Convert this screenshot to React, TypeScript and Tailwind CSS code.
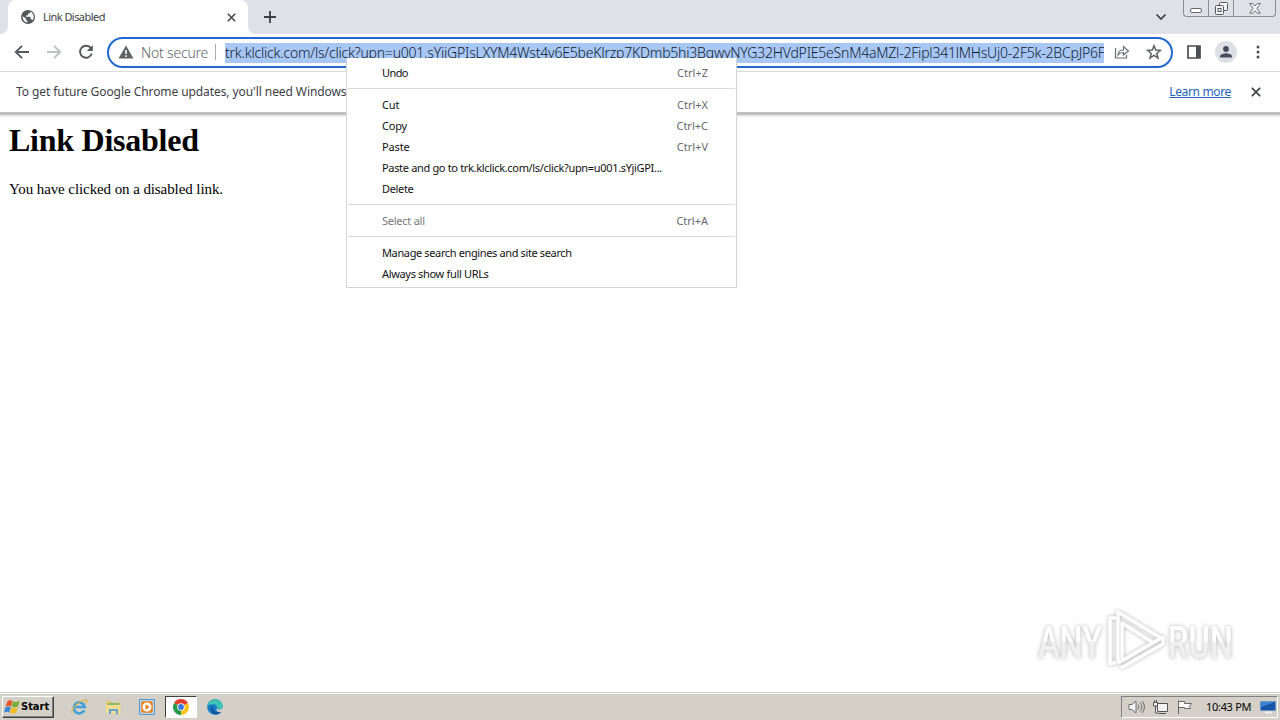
import type { ReactNode } from "react";

const url =
    "trk.klclick.com/ls/click?upn=u001.sYjiGPIsLXYM4Wst4v6E5beKJrzp7KDmb5hi3BqwyNYG32HVdPIE5eSnM4aMZl-2Fipl341lMHsUj0-2F5k-2BCpJP6F";

type Item = { label: string; keys?: string; disabled?: boolean; spacing?: string };

const menu: Item[][] = [
    [{ label: "Undo", keys: "Ctrl+Z", spacing: "tracking-[-0.6px]" }],
    [
        { label: "Cut", keys: "Ctrl+X", spacing: "tracking-[-0.1px]" },
        { label: "Copy", keys: "Ctrl+C", spacing: "tracking-[-0.2px]" },
        { label: "Paste", keys: "Ctrl+V", spacing: "tracking-[-0.15px]" },
        { label: "Paste and go to trk.klclick.com/ls/click?upn=u001.sYjiGPI..." },
        { label: "Delete" },
    ],
    [{ label: "Select all", keys: "Ctrl+A", disabled: true, spacing: "tracking-[-0.25px]" }],
    [
        { label: "Manage search engines and site search", spacing: "tracking-[-0.37px]" },
        { label: "Always show full URLs" },
    ],
];

const Globe = () => (
    <svg width="16" height="16" viewBox="0 0 16 16" className="shrink-0">
        <circle cx="8" cy="8" r="7" fill="#54585d" />
        <path d="M2.6 7.2 6 9.5v1.2l1.4 1.4v1.5A5.7 5.7 0 0 1 2.6 7.2zM9.8 2.6c2.3.8 3.9 2.9 3.9 5.4 0 1.2-.4 2.4-1.1 3.3-.2-.6-.7-1-1.4-1h-.6V8.5c0-.4-.3-.7-.7-.7H6V6.5h1.3c.4 0 .7-.3.7-.7V4.5h1c.7 0 1.3-.5 1.3-1.2z" fill="#fff" />
    </svg>
);

const Close = ({ size = 9 }: { size?: number }) => (
    <svg width={size} height={size} viewBox="0 0 9 9">
        <path d="M.8.8l7.4 7.4M8.2.8L.8 8.2" stroke="#45484c" strokeWidth="1.6" />
    </svg>
);

const TabStrip = () => (
    <div className="flex h-[34px] bg-[#dee1e6]">
        <div className="flex h-full w-2 items-end bg-white">
            <div className="h-full w-2 rounded-br-lg bg-[#dee1e6]" />
        </div>
        <div className="flex w-60 items-center rounded-t-lg bg-white pl-3 pr-[12px]">
            <Globe />
            <span className="ml-[7px] flex-1 text-[11px] tracking-[-0.55px] text-[#3c4043]">Link Disabled</span>
            <Close />
        </div>
        <div className="h-full w-2 bg-white">
            <div className="h-full w-2 rounded-bl-lg bg-[#dee1e6]" />
        </div>
        <svg width="14" height="14" viewBox="0 0 14 14" className="ml-[7px] mt-[10px]">
            <path d="M7 1v12M1 7h12" stroke="#3c4043" strokeWidth="1.8" />
        </svg>
        <div className="flex-1" />
        <svg width="12" height="8" viewBox="0 0 12 8" className="mr-[16px] mt-[13px]">
            <path d="M1.5 1.5 6 6l4.5-4.5" stroke="#3c4043" strokeWidth="1.7" fill="none" />
        </svg>
        <div className="mr-1 flex h-[17px] w-[93px] rounded-b-[4px] border border-t-0 border-[#8a8d92] bg-[#dee1e6]">
            <div className="flex w-[25px] justify-center border-r border-[#8a8d92] pt-2">
                <div className="h-[5px] w-3 rounded-[2px] border border-[#63666b] bg-white" />
            </div>
            <div className="flex w-[25px] justify-center border-r border-[#8a8d92] pt-[2px]">
                <svg width="13" height="13" viewBox="0 0 13 13" fill="#f5f5f5" stroke="#55585e">
                    <rect x="4.5" y=".5" width="8" height="8" rx="1" />
                    <rect x=".5" y="3.5" width="8" height="9" rx="1" />
                    <rect x="3" y="6.5" width="3" height="3" />
                </svg>
            </div>
            <div className="flex flex-1 justify-center pt-[3px]">
                <svg width="12" height="11" viewBox="0 0 12 11" fill="#f5f5f5" stroke="#6a6d72">
                    <path d="M.7.5h3L6 3 8.3.5h3L7.9 5.4l3.4 4.8h-3L6 7.8l-2.3 2.4h-3l3.4-4.8z" />
                </svg>
            </div>
        </div>
    </div>
);

const Toolbar = () => (
    <div className="flex h-[38px] items-center border-b border-[#d8dadd] bg-white">
        <svg width="16" height="16" viewBox="0 0 16 16" className="-mt-px ml-[14px]" fill="none" stroke="#55595e" strokeWidth="1.9">
            <path d="M15 8H2.5M8 1.8 1.8 8 8 14.2" />
        </svg>
        <svg width="16" height="16" viewBox="0 0 16 16" className="-mt-px ml-4" fill="none" stroke="#bcbfc3" strokeWidth="1.9">
            <path d="M1 8h12.5M8 1.8 14.2 8 8 14.2" />
        </svg>
        <svg width="16" height="16" viewBox="0 0 16 16" className="-mt-px ml-4">
            <path d="M13 4.3A6 6 0 1 0 13.8 9.5" fill="none" stroke="#55595e" strokeWidth="1.9" />
            <path d="M14.8 1v6h-6z" fill="#55595e" />
        </svg>
        <div className="ml-[13px] flex h-[31px] w-[1066px] items-center rounded-full border-2 border-[#2368cf]">
            <svg width="16" height="14" viewBox="0 0 16 14" className="-mt-px ml-[9px]">
                <path d="M8 .5 15.5 13.5H.5z" fill="#5f6368" />
                <path d="M8 5v4M8 10.3v1.6" stroke="#fff" strokeWidth="1.5" />
            </svg>
            <span className="ml-[7px] w-[68px] whitespace-nowrap text-[14px] font-light tracking-[-0.2px] text-[#5f6368]">Not secure</span>
            <div className="-mt-px ml-[6px] h-4 w-px bg-[#a9acb0]" />
            <div className="ml-[9px] h-5 w-[879px] overflow-hidden whitespace-nowrap bg-[#a8c7f5] text-[14px] font-light leading-5 tracking-[-0.21px] text-[#101c30]">
                {url}
            </div>
            <svg width="16" height="14" viewBox="0 0 16 14" className="-mt-px ml-[10px]" fill="none" stroke="#6a6e73" strokeWidth="1.2">
                <path d="M1.5 3v10h11v-3" />
                <path d="M4 10c.3-3.5 2.5-5 5.5-5V1.5l5 4.5-5 4V7.500C7 7.500 5.500 8 4 10z" />
            </svg>
            <svg width="16" height="16" viewBox="0 0 16 16" className="-mt-px ml-4" fill="none" stroke="#5f6368" strokeWidth="1.5">
                <path d="m8 1.7 1.7 4.4 4.7.3-3.6 3 1.2 4.6-4-2.6L4 14l1.2-4.6-3.6-3 4.7-.3z" />
            </svg>
        </div>
        <svg width="14" height="14" viewBox="0 0 14 14" className="-mt-px ml-[14px]">
            <path d="M1 1h12v12H1z" fill="none" stroke="#4b4e53" strokeWidth="1.7" />
            <path d="M9 1h4v12H9z" fill="#4b4e53" />
        </svg>
        <div className="-mt-px ml-[14px] flex size-[22px] items-center justify-center rounded-full bg-[#dcdfe4]">
            <svg width="14" height="14" viewBox="0 0 14 14" fill="#454d5e">
                <circle cx="7" cy="4" r="2.9" />
                <path d="M1 12.5v-1.2C1 9.3 5 8.3 7 8.3s6 1 6 3v1.2z" />
            </svg>
        </div>
        <svg width="4" height="14" viewBox="0 0 4 14" className="-mt-px ml-[19px]" fill="#4b4e53">
            <circle cx="2" cy="2" r="1.5" />
            <circle cx="2" cy="7" r="1.5" />
            <circle cx="2" cy="12" r="1.5" />
        </svg>
    </div>
);

const InfoBar = () => (
    <div className="flex h-10 items-center justify-between whitespace-nowrap bg-white pl-4 pr-[19px] text-[12px] text-[#3c4043]">
        <span className="tracking-[-0.08px]">To get future Google Chrome updates, you'll need Windows</span>
        <div className="flex items-center">
            <a className="mr-5 tracking-[-0.35px] text-[#2463bd] underline">Learn more</a>
            <Close size={10} />
        </div>
    </div>
);

const ContextMenu = () => (
    <div className="absolute left-[346px] top-[58px] h-[230px] w-[391px] border border-t-0 border-[#d3d5d8] bg-white pt-1 text-[11px] text-[#111]">
        {menu.map((group, i) => (
            <div key={i}>
                {i > 0 && (
                    <div className="h-[11px] pt-[5px]">
                        <div className="mx-px h-px bg-[#d9dadd]" />
                    </div>
                )}
                {group.map((item) => (
                    <div
                        key={item.label}
                        className={`flex h-[21px] items-center justify-between whitespace-nowrap pl-[35px] pr-[28px] pt-[2px] ${item.spacing ?? "tracking-[-0.33px]"}`}
                    >
                        <span className={item.disabled ? "text-[#77797c]" : ""}>{item.label}</span>
                        {item.keys && <span className="tracking-normal text-[#65676a]">{item.keys}</span>}
                    </div>
                ))}
            </div>
        ))}
    </div>
);

const Watermark = () => (
    <div className="absolute left-[1036px] top-[606px]">
        <svg width="210" height="70" viewBox="0 0 210 70" className="[filter:drop-shadow(0_0_2px_#b4b4b4)]">
            <defs>
                <linearGradient id="fade" x1="0" y1="0" x2="0" y2="70" gradientUnits="userSpaceOnUse">
                    <stop offset=".5" stopColor="#fff" />
                    <stop offset=".52" stopColor="#f0f0f0" />
                </linearGradient>
            </defs>
            <g fill="url(#fade)" fontFamily="Roboto" fontSize="45" fontWeight="500">
                <text x="2" y="52" textLength="64" lengthAdjust="spacingAndGlyphs">ANY</text>
                <text x="132" y="52" textLength="65" lengthAdjust="spacingAndGlyphs">RUN</text>
            </g>
            <g fill="none" stroke="#fff" strokeWidth="3.5" strokeLinejoin="round">
                <path d="M82 57V6l43 26-43 25" />
                <path d="M80 12h-6v46l6-2M85 62l42-24v-8M86 53V17l30 19" />
            </g>
        </svg>
    </div>
);

const ChromeLogo = () => (
    <svg width="16" height="16" viewBox="0 0 16 16">
        <path d="M8 8 1.07 4A8 8 0 0 1 14.93 4z" fill="#e33b2e" />
        <path d="M8 8 14.93 4A8 8 0 0 1 8 16z" fill="#fcc31e" />
        <path d="M8 8v8A8 8 0 0 1 1.07 4z" fill="#259b4b" />
        <circle cx="8" cy="8" r="3.8" fill="#fff" />
        <circle cx="8" cy="8" r="2.9" fill="#3978dc" />
    </svg>
);

const Slot = ({ children, active }: { children: ReactNode; active?: boolean }) => (
    <div
        className={
            active
                ? "flex h-[22px] w-8 items-center justify-center border border-[#404040] border-b-white border-r-white bg-white"
                : "flex h-[22px] w-8 items-center justify-center"
        }
    >
        {children}
    </div>
);

const Taskbar = () => (
    <div className="flex h-7 items-center border-t border-[#d4d0c8] bg-[#d4d0c8] shadow-[inset_0_1px_0_#fff]">
        <div className="ml-[2px] mt-px flex h-[22px] w-[52px] items-center border border-b-[#404040] border-l-white border-r-[#404040] border-t-white pl-px shadow-[inset_-1px_-1px_0_#808080]">
            <svg width="16" height="16" viewBox="0 0 16 16" className="shrink-0">
                <path d="M3.5 2C5.5.8 7 1 8.5 2L7 7.4c-1.7-1-3.2-1-5.300 0z" fill="#e55726" />
                <path d="M9.2 2.3c2 1.1 3.8 1 6.5-.6l-1.6 5.6c-2.3 1.4-4.2 1.4-6.4.3z" fill="#78ac34" />
                <path d="M1.4 8.2c2-1.1 3.6-1 5.4 0L5.2 13.6c-1.7-1-3.3-1-5.2.1z" fill="#3b86cf" />
                <path d="M7.5 8.5c2 1.1 3.9 1.1 6.3-.3l-1.5 5.3c-2.2 1.3-4.3 1.5-6.4.3z" fill="#f4bc24" />
            </svg>
            <span className="ml-px font-['DejaVu_Sans_Condensed','DejaVu_Sans',sans-serif] text-[11px] font-bold text-black">Start</span>
        </div>
        <div className="ml-[9px] mt-px flex gap-[2px]">
            <Slot>
                <svg width="18" height="18" viewBox="0 0 18 18" fill="none">
                    <path d="M14.3 12.2A5.5 5.5 0 1 1 14.7 9H4.5" stroke="#3f9fda" strokeWidth="2.6" />
                    <path d="M2.5 15.5C-1 13 9 2 16 2.2c1.5.3.5 2.5-.3 3.5" stroke="#e3b541" strokeWidth="1.2" />
                </svg>
            </Slot>
            <Slot>
                <svg width="17" height="16" viewBox="0 0 17 16">
                    <path d="M1 2h5l1 1.5h8V14H1z" fill="#e8c769" />
                    <path d="M3 4h11v3H3z" fill="#84b976" />
                    <path d="M1 6h14.5v8.5H1z" fill="#f5dd8d" />
                    <path d="M4 15V10h9v5h-2v-3H6v3z" fill="#5fa5d8" />
                </svg>
            </Slot>
            <Slot>
                <svg width="16" height="16" viewBox="0 0 16 16">
                    <path d="M.5.5h15v15H.5z" fill="#b7d6ef" stroke="#5797ca" />
                    <rect x="2.2" y="2.2" width="11.6" height="11.6" rx="1.5" fill="#ec8320" />
                    <circle cx="8" cy="8" r="4.5" fill="#fff" />
                    <path d="m6.5 5.2 4.3 2.8-4.3 2.8z" fill="#ec8320" />
                </svg>
            </Slot>
            <Slot active>
                <ChromeLogo />
            </Slot>
            <Slot>
                <svg width="16" height="16" viewBox="0 0 16 16">
                    <circle cx="8" cy="8" r="7.8" fill="#1879c5" />
                    <path d="M.3 7C1.5-1.5 15.5-2 15.8 7c0 3-3.8 4-6 2.8 1-1.8-.3-4.6-3.8-4.6C3 5.2 1 6 .3 7z" fill="#3fc3b5" />
                    <path d="M6 7.5c-1 4 3 7 7.5 4.5l1 .7C12 16 7 16.5 4.5 13 3 11 4 8 6 7.5z" fill="#15579f" />
                    <path d="M9.8 9.8c2 1.4 5.5.5 6.2-1.8v4l-1.800 1c-3 .8-5.500-.8-4.400-3.200z" fill="#d4d0c8" />
                </svg>
            </Slot>
        </div>
        <div className="flex-1" />
        <div className="mr-[2px] mt-px flex h-[22px] w-[157px] items-center border border-[#808080] border-b-white border-r-white pl-[6px]">
            <svg width="17" height="16" viewBox="0 0 17 16" fill="none" stroke="#6b6b6b">
                <path d="M1 5.5h3L8 2v12l-4-3.5H1z" fill="#f8f8f8" />
                <path d="M10 5.5q2 2.5 0 5M12 3.5q4 4.5 0 9M14 2q5 6 0 12" />
            </svg>
            <svg width="17" height="16" viewBox="0 0 17 16" className="ml-[7px]" fill="#f3f3f3" stroke="#555">
                <path d="M5.5 4.5h10v8h-10zM7 14.5h7M3.5 7v7H7" />
                <path d="M1.5 3.5h4V7h-4zM2.5 1v2M4.5 1v2" />
            </svg>
            <svg width="17" height="16" viewBox="0 0 17 16" className="ml-[7px]" fill="#fafafa" stroke="#666">
                <path d="M2.5 1.5V15M2.5 2.5h6v2h7l-2 3 1 2h-6v-1h-6" />
            </svg>
            <span className="ml-[13px] w-[47px] whitespace-nowrap text-[11px] tracking-[-0.3px] text-black">10:43 PM</span>
            <svg width="16" height="14" viewBox="0 0 16 14" className="ml-[7px]">
                <path d="M.5 1.5h15v9H.5z" fill="#1954a7" stroke="#6b94c6" />
                <path d="M1 2h14L1 7z" fill="#3c83d3" />
                <path d="M5 12.5h7" stroke="#eee" strokeWidth="2" />
            </svg>
        </div>
    </div>
);

const App = () => {
    return (
        <div className="relative flex h-[720px] w-[1280px] flex-col overflow-hidden bg-white font-['Noto_Sans','Open_Sans',sans-serif]">
            <TabStrip />
            <Toolbar />
            <InfoBar />
            <div className="h-px bg-[#c4c4c4]" />
            <div className="h-1 bg-linear-to-b from-[#acacac] to-white" />
            <main className="flex-1 bg-white pl-[9px] font-['Liberation_Serif',serif] text-black">
                <h1 className="mt-[5px] text-[32px] font-bold leading-9 tracking-[-0.25px]">Link Disabled</h1>
                <p className="mt-[22px] text-[15px] leading-[18px] tracking-[-0.09px]">You have clicked on a disabled link.</p>
            </main>
            <Taskbar />
            <ContextMenu />
            <Watermark />
        </div>
    );
};

export default App;
